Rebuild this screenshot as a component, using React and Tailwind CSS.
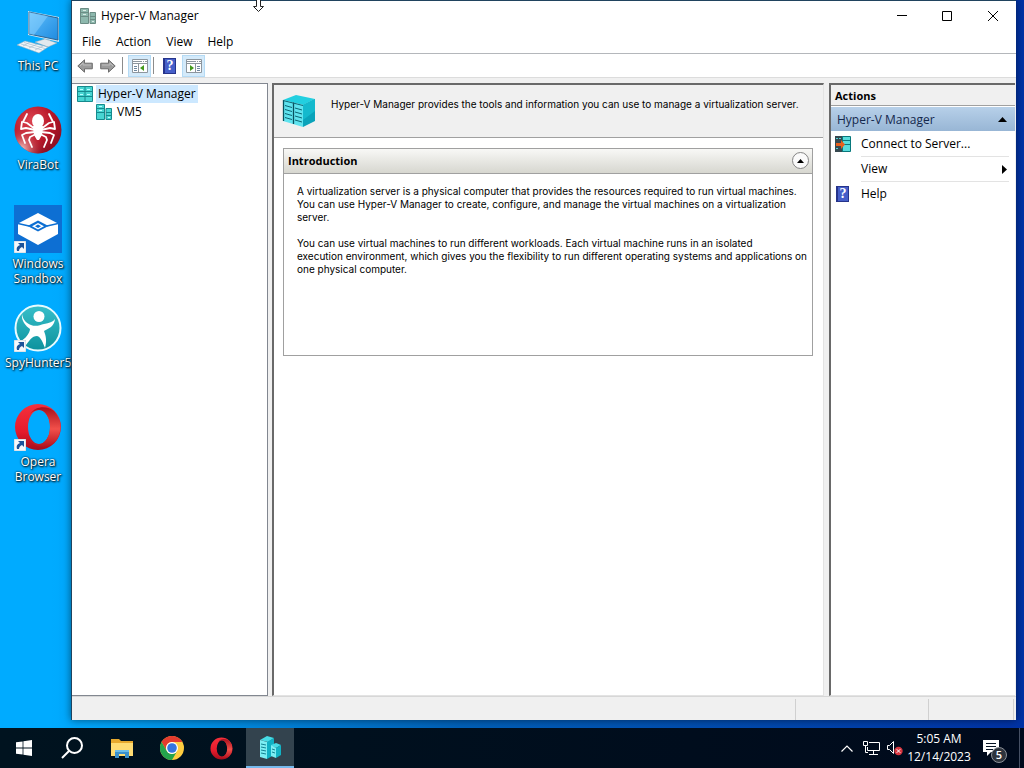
import React from 'react';

const desktopItems = [
    { label: 'This PC', icon: PcIcon },
    { label: 'ViraBot', icon: SpiderIcon },
    { label: 'Windows Sandbox', icon: SandboxIcon, shortcut: true },
    { label: 'SpyHunter5', icon: SpyIcon, shortcut: true },
    { label: 'Opera Browser', icon: OperaIcon, shortcut: true },
];

const menus = ['File', 'Action', 'View', 'Help'];

function PcIcon() {
    return (
        <svg viewBox="0 0 48 48" className="size-12">
            <defs>
                <linearGradient id="pcScreen" x1="0" y1="0" x2="1" y2="1">
                    <stop offset="0" stopColor="#6cc5fb" />
                    <stop offset="0.5" stopColor="#3fa5ee" />
                    <stop offset="1" stopColor="#1f8be0" />
                </linearGradient>
            </defs>
            <path d="M14 4l31 6v25l-31-7z" fill="#cfe6f5" />
            <path d="M15 5l29 6v22l-29-6z" fill="url(#pcScreen)" stroke="#2b6390" />
            <path d="M15 5l19 4-14 19-5-1z" fill="#8fd4ff" opacity="0.5" />
            <path d="M30 32l6 1v4l-6-1z" fill="#c3cdd4" />
            <path d="M21 35l10-3 12 4-9 4z" fill="#e2e9ee" stroke="#9aabb7" strokeWidth="0.5" />
            <path d="M3 38l8-4 23 6-9 6z" fill="#f0f5f8" stroke="#93a9b8" strokeWidth="0.5" />
            <path d="M7 37l21 6M10 35.500l21 6M9 39l7-4M15 41l8-4M21 43l8-4" stroke="#a8bccb" strokeWidth="0.7" />
        </svg>
    );
}

function SpiderIcon() {
    return (
        <svg viewBox="0 0 48 48" className="size-12">
            <defs>
                <radialGradient id="spiderBall" cx="0.35" cy="0.3" r="0.75">
                    <stop offset="0" stopColor="#dc4450" />
                    <stop offset="0.6" stopColor="#b81628" />
                    <stop offset="1" stopColor="#8c0f22" />
                </radialGradient>
                <radialGradient id="spiderGlow" cx="0.15" cy="0.9" r="0.5">
                    <stop offset="0" stopColor="#ffd9d2" stopOpacity="0.9" />
                    <stop offset="1" stopColor="#c02030" stopOpacity="0" />
                </radialGradient>
            </defs>
            <circle cx="24" cy="24" r="23.500" fill="url(#spiderBall)" />
            <circle cx="24" cy="24" r="23.500" fill="url(#spiderGlow)" />
            <g fill="none" stroke="#fff" strokeWidth="1.800" strokeLinejoin="round" strokeLinecap="round">
                <path d="M21 23l-8-6-4-1 4-8M27 23l8-6 4-1-4-8" />
                <path d="M21 24l-9-2-5 1 1-7M27 24l9-2 5 1-1-7" />
                <path d="M21 26l-9 1-4 2 3 8M27 26l9 1 4 2-3 8" />
                <path d="M22 28l-6 3-1 3 3 7M26 28l6 3 1 3-3 7" />
            </g>
            <ellipse cx="24" cy="15" rx="6" ry="7" fill="#fff" />
            <path d="M19 20h10l-1 9-3 5h-2l-3-5z" fill="#fff" />
        </svg>
    );
}

function SandboxIcon() {
    return (
        <svg viewBox="0 0 48 48" className="size-12">
            <path fill="#0d6fd3" d="M0 0h48v48H0z" />
            <path fill="#fff" d="M24 8l20 10.500V29L24 40 4 29V18.500z" />
            <path fill="#0d6fd3" d="M24 15.500L34.500 21 24 26.500 13.500 21z" />
            <path fill="#fff" d="M24 18l6 3.200-6 3.200-6-3.200z" />
            <path fill="#0d6fd3" d="M24 19.500l3 1.700-3 1.700-3-1.700z" />
            <path d="M4 18.500l11 2.500M44 18.500L33 21" fill="none" stroke="#0d6fd3" strokeWidth="1.300" />
        </svg>
    );
}

function SpyIcon() {
    return (
        <svg viewBox="0 0 48 48" className="size-12">
            <defs>
                <linearGradient id="spyBg" x1="0" y1="0" x2="0" y2="1">
                    <stop offset="0" stopColor="#38bfca" />
                    <stop offset="1" stopColor="#0c929d" />
                </linearGradient>
            </defs>
            <circle cx="24" cy="24" r="22.500" fill="url(#spyBg)" stroke="#e8fbff" strokeWidth="2" />
            <circle cx="25" cy="12.500" r="5.500" fill="#fff" />
            <path fill="#fff" d="M8 10c1 6 4 9 9 11 5 2 9 0 13-1 5-1 9-2 11-5-1 8-6 9-11 12 2 5 3 10 1 17-2-5-4-11-8-12-5 0-8 5-11 9-3-1-4-2-5-4 4-2 9-8 9-12-4-3-9-8-8-15z" />
        </svg>
    );
}

function OperaIcon({ className = 'size-12' }) {
    return (
        <svg viewBox="0 0 48 48" className={className}>
            <defs>
                <linearGradient id="operaRing" x1="0" y1="0" x2="0" y2="1">
                    <stop offset="0" stopColor="#f5303c" />
                    <stop offset="0.6" stopColor="#e51b2c" />
                    <stop offset="1" stopColor="#a50d1b" />
                </linearGradient>
                <linearGradient id="operaSide" x1="0" y1="0" x2="0" y2="1">
                    <stop offset="0" stopColor="#a8101c" />
                    <stop offset="0.55" stopColor="#f2504a" />
                    <stop offset="1" stopColor="#b3141f" />
                </linearGradient>
            </defs>
            <path
                fill="url(#operaRing)"
                fillRule="evenodd"
                d="M24 1a23 23 0 1 0 0 46a23 23 0 1 0 0-46zM25 7a11 17 0 0 1 0 34a11 17 0 0 1 0-34z"
            />
            <path fill="url(#operaSide)" d="M16 11C22 2 34 3 40 8a23 23 0 0 1 0 32c-6 5-18 6-24-3 3 3 6 4 9 4a11 17 0 0 0 0-34c-3 0-6 1-9 4z" />
        </svg>
    );
}

function ShortcutArrow() {
    return (
        <svg viewBox="0 0 12 12" className="absolute bottom-0 left-0 size-3">
            <path fill="#f5f8fb" stroke="#9ba9b6" strokeWidth="0.5" d="M0 0h12v12H0z" />
            <path fill="#1c5299" d="M4 2h6v6L8 6c-2 1-3 2-3 4H3c-1-3 0-5 3-6z" />
        </svg>
    );
}

function ServerIcon({ pale }) {
    const fill = pale ? '#8db8ad' : '#48d5d2';
    const line = pale ? '#6b8c84' : '#168a8e';
    return (
        <svg viewBox="0 0 16 16" className="size-4 shrink-0" fill={fill} stroke={line}>
            <path d="M.5.5h8v15h-8zM10 4.500h5.500v11H10z" />
            <path d="M1 4.500h7M1 8.500h7M10 8.500h5M10 11.500h5" />
            <path d="M3 2.500h3M3 6.500h3M12 13.500h2" stroke={pale ? '#d9ebe5' : '#b8ffff'} />
        </svg>
    );
}

function RackIcon() {
    return (
        <svg viewBox="0 0 16 16" className="size-4 shrink-0" fill="#48d5d2" stroke="#168a8e">
            <path d="M.5.5h15v15H.5zM8 1v14M1 5.500h14M1 10.500h14" />
            <path d="M3 8.500h3M10 8.500h3M3 3.500h3M10 3.500h3" stroke="#b8ffff" />
        </svg>
    );
}

function BigRackIcon() {
    return (
        <svg viewBox="0 0 34 34" className="size-[34px] shrink-0">
            <path fill="#22cfe0" d="M1 6L14 1l19 4-12 6z" />
            <path fill="#0aa3ba" d="M21 11l12-6v22l-12 6z" />
            <path fill="#14b9cd" d="M21 11l12-6v12l-12 9z" />
            <path fill="#5fe3ef" d="M1 6l20 5v22L1 27z" />
            <path stroke="#07505e" strokeWidth="1.300" d="M1.500 6v21M11.500 8.500V30" />
            <path stroke="#0d6472" d="M1 6.500l20 5M3 11.500l7 2M3 15.500l7 2M3 19.500l7 2M3 23.500l7 2M13 14l7 2M13 18l7 2M13 22l7 2M13 26l7 2" />
        </svg>
    );
}

function ArrowIcon({ flip }) {
    return (
        <svg viewBox="0 0 16 14" className={flip ? 'h-[14px] w-4 -scale-x-100' : 'h-[14px] w-4'}>
            <path d="M.8 7L7.500.8v3.400h7.800v5.600H7.500v3.400z" fill="#9b9b9b" stroke="#6c6c6c" />
            <path d="M3 7l3-3v2h8" fill="none" stroke="#bdbdbd" />
        </svg>
    );
}

function PaneIcon({ right }) {
    return (
        <svg viewBox="0 0 16 14" className="h-[14px] w-4" fill="none">
            <path fill="#fff" stroke="#8d969e" d="M.5.500h15v13H.5z" />
            <path stroke="#8d969e" d="M1 2.500h14M1 4.500h14" />
            <path stroke="#fff" d="M10 2.500h1M12 2.500h1" />
            {right ? (
                <g>
                    <path stroke="#8d969e" d="M9.500 5v8" />
                    <path stroke="#6f88a0" d="M11 7.500h3M11 9.500h3M11 11.500h3" />
                    <path fill="#43991c" d="M4 6l4 3-4 3z" />
                </g>
            ) : (
                <g>
                    <path stroke="#8d969e" d="M6.500 5v8" />
                    <path stroke="#6f88a0" d="M2 7.500h3M2 9.500h3M2 11.500h3" />
                    <path fill="#43991c" d="M12 6L8 9l4 3z" />
                </g>
            )}
        </svg>
    );
}

function HelpIcon() {
    return (
        <span className="flex h-4 w-[13px] items-center justify-center border border-l-2 border-[#26348b] bg-[#465fc9] font-['Liberation_Serif',serif] text-[14px] leading-none font-bold text-white">
            ?
        </span>
    );
}

function ConnectIcon() {
    return (
        <svg viewBox="0 0 16 16" className="size-4">
            <path fill="#374950" d="M0 0h8v16H0z" />
            <path fill="#58dcdc" stroke="#08787c" d="M7.500.5h8v15h-8zM8 4.500h7M8 8.500h7" />
            <path stroke="#54d5d8" d="M1 2.500h2M4 2.500h2M1 12.500h2" />
            <path fill="#e8601c" d="M1 7h5V4l4 4.500L6 13v-3H1z" />
        </svg>
    );
}

function ChromeIcon() {
    return (
        <svg viewBox="0 0 24 24" className="size-6">
            <circle cx="12" cy="12" r="12" fill="#ffcd40" />
            <path fill="#e33b2e" d="M1.600 6A12 12 0 0 1 22.400 6H12a6 6 0 0 0-5.200 9z" />
            <path fill="#24a44c" d="M1.600 6A12 12 0 0 0 12 24l5.200-9a6 6 0 0 1-10.400 0z" />
            <circle cx="12" cy="12" r="6" fill="#fff" />
            <circle cx="12" cy="12" r="4.800" fill="#3475df" />
        </svg>
    );
}

function TaskbarServerIcon() {
    return (
        <svg viewBox="0 0 22 23" className="h-[23px] w-[22px]">
            <path fill="#47dbe5" d="M1 4l7-4 7 2-6 4z" />
            <path fill="#0fb0c4" d="M8 6l7-4v17l-7 4z" />
            <path fill="#7ceef3" d="M1 4l7 2v17l-7-2z" />
            <path fill="#47dbe5" d="M12 9l5-2 5 2-5 3z" />
            <path fill="#12b3c5" d="M17 12l5-3v10l-5 3z" />
            <path fill="#7ceef3" d="M12 9l5 3v10l-5-2z" />
            <path stroke="#128292" d="M2 8l5 1M2 11l5 1M2 14l5 1M2 17l5 1M13 13l3 1M13 16l3 1" />
        </svg>
    );
}

function Desktop() {
    return (
        <nav className="flex w-[71px] shrink-0 flex-col pt-[7px]" aria-label="Desktop">
            {desktopItems.map(({ label, icon: Icon, shortcut }) => (
                <button key={label} className="flex h-[99px] w-full flex-col items-center gap-[3px] pl-[5px] text-[12px] leading-[15px] text-white [text-shadow:1px_1px_2px_#000,0_0_2px_#000]">
                    <span className="relative">
                        <Icon />
                        {shortcut && <ShortcutArrow />}
                    </span>
                    <span className="w-[66px]">{label}</span>
                </button>
            ))}
        </nav>
    );
}

function TitleBar() {
    return (
        <header className="flex h-[30px] shrink-0 items-center pl-2">
            <ServerIcon pale />
            <h1 className="ml-[5px] flex-1">Hyper-V Manager</h1>
            <button aria-label="Minimize" className="flex h-full w-11 items-center justify-center">
                <svg viewBox="0 0 10 10" className="size-[10px]" stroke="#000"><path d="M0 4.500h10" /></svg>
            </button>
            <button aria-label="Maximize" className="flex h-full w-[46px] items-center justify-center">
                <svg viewBox="0 0 10 10" className="size-[10px]" fill="none" stroke="#000"><path d="M.5.5h9v9h-9z" /></svg>
            </button>
            <button aria-label="Close" className="flex h-full w-[46px] items-center justify-center">
                <svg viewBox="0 0 10 10" className="size-[10px]" stroke="#000"><path d="M0 0l10 10M10 0L0 10" /></svg>
            </button>
        </header>
    );
}

function Toolbar() {
    return (
        <div className="flex h-6 shrink-0 items-center border-b border-[#dcdcdc] pl-[5px]">
            <button aria-label="Back"><ArrowIcon /></button>
            <button aria-label="Forward" className="ml-[7px]"><ArrowIcon flip /></button>
            <span className="ml-[6px] h-[17px] w-px bg-[#8c8c8c]" />
            <button aria-label="Console tree" className="ml-[5px] flex h-[22px] w-[23px] items-center justify-center border border-[#b5dbf5] bg-[#d4eafa]">
                <PaneIcon />
            </button>
            <span className="ml-[2px] h-[17px] w-px bg-[#8c8c8c]" />
            <button aria-label="Help" className="ml-[9px]"><HelpIcon /></button>
            <button aria-label="Action pane" className="ml-[6px] flex h-[22px] w-[23px] items-center justify-center border border-[#b5dbf5] bg-[#d4eafa]">
                <PaneIcon right />
            </button>
        </div>
    );
}

function Tree() {
    return (
        <aside className="w-[196px] shrink-0 border border-l-0 border-[#828790] bg-white pt-px pl-[5px]">
            <button className="flex h-[18px] items-center">
                <RackIcon />
                <span className="ml-[3px] bg-[#cce8ff] px-[2px] leading-[18px]">Hyper-V Manager</span>
            </button>
            <button className="ml-[19px] flex h-[18px] items-center">
                <ServerIcon />
                <span className="ml-[5px]">VM5</span>
            </button>
        </aside>
    );
}

function Details() {
    return (
        <main className="min-w-0 flex-1 border-t-2 border-r border-b border-l-2 border-t-[#696969] border-r-[#e3e3e3] border-b-[#e3e3e3] border-l-[#696969] bg-white font-[Inter,'Liberation_Sans',sans-serif] text-[10px] leading-[13px]">
            <div className="flex h-[53px] border-b border-[#a0a0a0] bg-[#f0f0f0] pt-[9px] pl-2">
                <BigRackIcon />
                <p className="ml-[15px] pt-1">
                    Hyper-V Manager provides the tools and information you can use to manage a virtualization server.
                </p>
            </div>
            <section className="mt-[10px] mr-[10px] ml-[9px] h-[208px] border border-[#a0a0a0]">
                <div className="flex h-[25px] items-center border-b border-[#a0a0a0] bg-linear-to-b from-[#f8f8f6] to-[#d7d7d0] pr-[3px] pb-px pl-1">
                    <h2 className="flex-1 font-['Open_Sans','Noto_Sans',sans-serif] text-[11px] font-bold">Introduction</h2>
                    <button aria-label="Collapse" className="flex size-[17px] items-center justify-center rounded-full border border-[#858585] bg-[#fafafa]">
                        <svg viewBox="0 0 7 4" className="h-1 w-[7px]"><path d="M0 4l3.500-4L7 4z" /></svg>
                    </button>
                </div>
                <div className="space-y-[13px] py-[11px] pl-[13px]">
                    <p>
                        A virtualization server is a physical computer that provides the resources required to run virtual machines.
                        <br />
                        You can use Hyper-V Manager to create, configure, and manage the virtual machines on a virtualization
                        <br />
                        server.
                    </p>
                    <p>
                        You can use virtual machines to run different workloads. Each virtual machine runs in an isolated
                        <br />
                        execution environment, which gives you the flexibility to run different operating systems and applications on
                        <br />
                        one physical computer.
                    </p>
                </div>
            </section>
        </main>
    );
}

function Actions() {
    return (
        <aside className="mr-px w-[186px] shrink-0 border-t-2 border-b border-l-2 border-t-[#696969] border-b-[#e3e3e3] border-l-[#696969] bg-white">
            <h2 className="h-[21px] border-b border-[#a0a0a0] bg-[#f0f0f0] pl-1 text-[11px] leading-[21px] font-bold">Actions</h2>
            <button className="mt-px flex h-6 w-full items-center justify-between bg-linear-to-b from-[#b7d0e9] to-[#98b6d5] pt-px pr-2 pl-[6px] text-[#14284d]">
                Hyper-V Manager
                <svg viewBox="0 0 9 5" className="h-[5px] w-[9px]"><path d="M0 5l4.500-5L9 5z" fill="#000" /></svg>
            </button>
            <ul className="pr-[6px] pl-1">
                <li>
                    <button className="flex h-[25px] w-full items-center">
                        <span className="w-[26px]"><ConnectIcon /></span>
                        Connect to Server...
                    </button>
                </li>
                <li className="ml-[26px] border-y border-[#e3e3e3]">
                    <button className="flex h-6 w-full items-center justify-between pr-[2px]">
                        View
                        <svg viewBox="0 0 5 9" className="h-[9px] w-[5px]"><path d="M0 0l5 4.500L0 9z" /></svg>
                    </button>
                </li>
                <li>
                    <button className="flex h-6 w-full items-center">
                        <span className="w-[26px] pl-px"><HelpIcon /></span>
                        Help
                    </button>
                </li>
            </ul>
        </aside>
    );
}

function Taskbar() {
    return (
        <footer className="flex h-10 shrink-0 items-stretch bg-linear-to-r from-[#00131f] to-[#000a1c] text-white">
            <button aria-label="Start" className="flex w-12 items-center justify-center">
                <svg viewBox="0 0 16 16" className="size-4" fill="#fff">
                    <path d="M0 2.300l6.600-.9v6.200H0zM7.400 1.300L16 0v7.600H7.400zM0 8.400h6.600v6.200L0 13.700zM7.400 8.400H16V16l-8.600-1.300z" />
                </svg>
            </button>
            <button aria-label="Search" className="flex w-12 items-center justify-center">
                <svg viewBox="0 0 22 22" className="size-[22px]" fill="none" stroke="#fff" strokeWidth="2">
                    <circle cx="13.500" cy="8.500" r="7.500" />
                    <path d="M8 14l-7 7" />
                </svg>
            </button>
            <button aria-label="File Explorer" className="flex w-[52px] items-center justify-center">
                <svg viewBox="0 0 22 19" className="h-[19px] w-[22px]">
                    <path fill="#e7a92e" d="M0 0h8l2 2h12v15H0z" />
                    <path fill="#ffdc73" d="M0 4h22v13H0z" />
                    <path fill="#3b91cd" d="M4 19v-8h14v8h-4v-4H8v4z" />
                    <path fill="#6bbdea" d="M4 11h14v2H4z" />
                </svg>
            </button>
            <button aria-label="Chrome" className="flex w-12 items-center justify-center"><ChromeIcon /></button>
            <button aria-label="Opera" className="flex w-[50px] items-center justify-center"><OperaIcon className="size-[23px]" /></button>
            <button aria-label="Hyper-V Manager" className="flex w-12 items-center justify-center border-b-2 border-[#76b9ed] bg-[#33434e]">
                <TaskbarServerIcon />
            </button>
            <div className="ml-auto flex items-center">
                <button aria-label="Show hidden icons">
                    <svg viewBox="0 0 12 7" className="h-[7px] w-3" fill="none" stroke="#fff" strokeWidth="1.200"><path d="M.5 6.500L6 1l5.500 5.500" /></svg>
                </button>
                <button aria-label="Network" className="ml-[10px]">
                    <svg viewBox="0 0 17 14" className="h-[14px] w-[17px]" fill="none" stroke="#fff">
                        <path d="M6 1.500h10.500v8H4.500V6M10.500 10v3M6 13.500h9M.5.500h4v4h-4zM2.500 5v6.500H5" />
                    </svg>
                </button>
                <button aria-label="Volume muted" className="ml-[7px]">
                    <svg viewBox="0 0 16 16" className="size-4" fill="none" stroke="#fff">
                        <path d="M.5 5.500h2l4-4v12l-4-4h-2z" />
                        <circle cx="11.500" cy="11" r="4.200" fill="#d93640" stroke="none" />
                        <path d="M9.700 9.200l3.600 3.600M13.300 9.200l-3.600 3.600" />
                    </svg>
                </button>
                <button className="ml-1 w-16 text-center text-[12px] leading-[18px] whitespace-nowrap">
                    <span className="block">5:05 AM</span>
                    <span className="block">12/14/2023</span>
                </button>
                <button aria-label="Notifications, 5 new" className="relative mr-5 ml-3 pb-px">
                    <svg viewBox="0 0 16 16" className="size-4">
                        <path fill="#fff" d="M0 0h16v12H8l-4 4v-4H0z" />
                        <path stroke="#071425" d="M3 3.500h10M3 6.500h10M3 9.500h7" />
                    </svg>
                    <span className="absolute top-[7px] left-2 flex size-4 items-center justify-center rounded-full border border-[#8c9199] bg-[#2e343d] text-[11px] leading-none font-semibold">5</span>
                </button>
                <span className="mr-1 h-10 w-px bg-[#465064]" />
            </div>
        </footer>
    );
}

export default function App() {
    return (
        <div className="relative flex h-screen flex-col overflow-hidden bg-linear-to-r from-[#00abff] from-5% via-[#0060b8] via-45% to-[#0032a5] font-['Open_Sans','Noto_Sans',sans-serif] text-[12px] leading-4 text-black">
            <div className="flex min-h-0 flex-1 pr-2 pb-2">
                <Desktop />
                <div className="flex min-w-0 flex-1 flex-col border-t border-l border-[#20435e] bg-white shadow-[0_0_8px_rgba(0,0,0,0.5)]">
                    <TitleBar />
                    <nav className="flex h-[23px] shrink-0 items-center gap-[15px] border-b border-[#b4b7bb] pl-[10px]">
                        {menus.map((menu) => <button key={menu}>{menu}</button>)}
                    </nav>
                    <Toolbar />
                    <div className="flex min-h-0 flex-1 bg-[#f0f0f0] pt-[5px]">
                        <Tree />
                        <div className="w-1 shrink-0" />
                        <Details />
                        <div className="w-[5px] shrink-0" />
                        <Actions />
                    </div>
                    <div className="flex h-6 shrink-0 justify-end border-t border-[#d7d7d7] bg-[#f0f0f0] pt-[2px] pr-[2px]">
                        <span className="w-[133px] border-l border-[#d0d0d0]" />
                        <span className="w-[86px] border-x border-[#d0d0d0]" />
                    </div>
                </div>
            </div>
            <Taskbar />
            <svg viewBox="0 0 11 13" className="pointer-events-none absolute top-0 left-[253px] h-[13px] w-[11px]">
                <path d="M3.500 0v6.500h-3l5 5 5-5h-3V0" fill="#fff" stroke="#222" />
            </svg>
        </div>
    );
}
